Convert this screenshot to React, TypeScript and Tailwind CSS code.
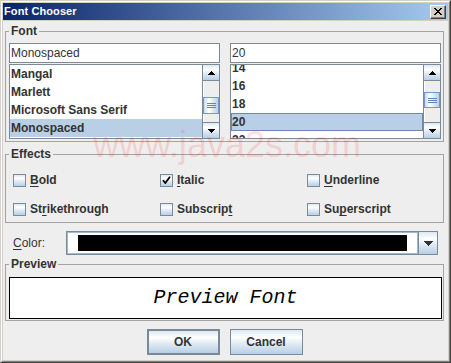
import React from 'react'

const ui = "font-['Liberation_Sans',Arial,sans-serif]"
const ocean = 'bg-[linear-gradient(to_bottom,#dde8f3_0%,#ffffff_30%,#dde8f3_60%,#b8cfe5_100%)]'

function Arrow({ up = false, wide = false }: { up?: boolean; wide?: boolean }) {
  const rows = wide ? [9, 7, 5, 3, 1] : [7, 5, 3, 1]
  const w = rows[0]
  const list = up ? [...rows].reverse() : rows
  return (
    <svg width={w} height={rows.length} className="block" shapeRendering="crispEdges">
      {list.map((n, i) => (
        <rect key={i} x={(w - n) / 2} y={i} width={n} height={1} fill={wide ? '#333' : '#000'} />
      ))}
    </svg>
  )
}

function CloseGlyph() {
  const px: [number, number, number][] = [
    [0, 0, 2], [6, 0, 2], [1, 1, 2], [5, 1, 2], [2, 2, 4], [3, 3, 2],
    [2, 4, 4], [1, 5, 2], [5, 5, 2], [0, 6, 2], [6, 6, 2],
  ]
  return (
    <svg width="8" height="7" className="block" shapeRendering="crispEdges">
      {px.map(([x, y, w], i) => (
        <rect key={i} x={x} y={y} width={w} height={1} fill="#000" />
      ))}
    </svg>
  )
}

function ScrollBar({ thumb }: { thumb: string }) {
  return (
    <div className="flex w-[17px] flex-col border-l border-[#7a8a99] bg-[#eeeeee]">
      <div className={`flex h-[16px] items-center justify-center border-b border-[#7a8a99] ${ocean}`}>
        <Arrow up />
      </div>
      <div className="flex-1 shadow-[inset_1px_0_0_#ffffff]">
        <div className={`${thumb} flex flex-col items-center justify-center gap-[1px] border border-[#7896d0] bg-[linear-gradient(to_right,#c8ddf2,#ffffff_35%,#b8cfe5)]`}>
          <div className="h-px w-[9px] bg-[#6382bf]" />
          <div className="h-px w-[9px] bg-[#6382bf]" />
          <div className="h-px w-[9px] bg-[#6382bf]" />
        </div>
      </div>
      <div className={`flex h-[16px] items-center justify-center border-t border-[#7a8a99] ${ocean}`}>
        <Arrow />
      </div>
    </div>
  )
}

function FontColumn({
  value,
  items,
  selected,
  focused,
  shift,
  thumb,
}: {
  value: string
  items: string[]
  selected: string
  focused: boolean
  shift: string
  thumb: string
}) {
  return (
    <div className="flex flex-col gap-px">
      <div className="flex h-[20px] items-center border border-[#7a8a99] bg-white pl-px text-[12px] leading-[18px]">
        {value}
      </div>
      <div className="flex h-[75px] border border-[#7a8a99] bg-white">
        <div className="min-w-0 flex-1 overflow-hidden">
          <div className={shift}>
            {items.map((it) => (
              <div
                key={it}
                className={`h-[18px] whitespace-nowrap pl-px text-[12px] font-bold leading-[18px] ${
                  it === selected ? 'bg-[#b8cfe5]' : ''
                } ${it === selected && focused ? 'shadow-[inset_0_0_0_1px_#6c87b0]' : ''}`}
              >
                {it}
              </div>
            ))}
          </div>
        </div>
        <ScrollBar thumb={thumb} />
      </div>
    </div>
  )
}

function CheckBox({ label, at, checked = false }: { label: string; at: number; checked?: boolean }) {
  return (
    <div className="flex h-[22px] items-center gap-[4px]">
      <div className={`flex h-[13px] w-[13px] items-center justify-center border border-[#7a8a99] ${ocean}`}>
        {checked && (
          <svg width="9" height="8" viewBox="0 0 9 8" className="block">
            <path d="M1 4.2 L3.3 7 L8 0.8" fill="none" stroke="#000" strokeWidth="1.8" />
          </svg>
        )}
      </div>
      <span className="text-[12px] font-bold leading-[14px]">
        {label.slice(0, at)}
        <span className="underline underline-offset-2">{label[at]}</span>
        {label.slice(at + 1)}
      </span>
    </div>
  )
}

function Legend({ children }: { children: React.ReactNode }) {
  return <legend className="px-[2px] text-[12px] font-bold leading-[14px]">{children}</legend>
}

export default function App() {
  return (
    <div
      className={`${ui} relative h-[363px] w-[451px] border border-[#d4d0c8] border-r-[#404040] border-b-[#404040] bg-[#d4d0c8]`}
    >
      <div className="flex h-full flex-col border border-white border-r-[#808080] border-b-[#808080] p-px">
        <div className="mb-px flex h-[17px] items-center justify-between bg-[linear-gradient(to_right,#0a246a,#a6caf0)] pl-px pr-[2px]">
          <span className="text-[11px] font-bold leading-none tracking-[0.1px] text-white">Font Chooser</span>
          <div className="flex h-[14px] w-[16px] items-center justify-center border border-white border-r-[#404040] border-b-[#404040] bg-[#d4d0c8] shadow-[inset_-1px_-1px_0_#808080]">
            <CloseGlyph />
          </div>
        </div>

        <div className="flex flex-1 flex-col bg-[#eeeeee] pl-[2px] pr-[4px] pt-[3px] text-[#333333]">
          <fieldset className="border border-[#a3a3a3] pb-[2px] pl-[3px] pr-[2px]">
            <Legend>Font</Legend>
            <div className="mt-[5px] grid grid-cols-2 gap-x-[10px]">
              <FontColumn
                value="Monospaced"
                items={['Mangal', 'Marlett', 'Microsoft Sans Serif', 'Monospaced']}
                selected="Monospaced"
                focused={false}
                shift="mt-0"
                thumb="mt-[16px] h-[17px]"
              />
              <FontColumn
                value="20"
                items={['14', '16', '18', '20', '22']}
                selected="20"
                focused
                shift="-mt-[6px]"
                thumb="mt-[11px] h-[16px]"
              />
            </div>
          </fieldset>

          <fieldset className="mt-[5px] border border-[#a3a3a3] pb-[2px] pl-[3px]">
            <Legend>Effects</Legend>
            <div className="ml-[4px] mt-[8px] grid grid-cols-[147px_147px_1fr] gap-y-[7px]">
              <CheckBox label="Bold" at={0} />
              <CheckBox label="Italic" at={0} checked />
              <CheckBox label="Underline" at={0} />
              <CheckBox label="Strikethrough" at={2} />
              <CheckBox label="Subscript" at={8} />
              <CheckBox label="Superscript" at={2} />
            </div>
          </fieldset>

          <div className="mt-[8px] flex h-[24px] items-center pl-[8px] pr-[6px]">
            <span className="w-[53px] text-[12px] leading-[14px]">
              <span className="underline underline-offset-2">C</span>olor:
            </span>
            <div className="flex h-full flex-1 border border-[#7a8a99] bg-white">
              <div className="flex flex-1 px-[11px] py-[3px] shadow-[inset_0_0_0_1px_#a3b8cc]">
                <div className="flex-1 bg-black" />
              </div>
              <div className={`flex w-[19px] items-center justify-center border-l border-[#7a8a99] ${ocean}`}>
                <Arrow wide />
              </div>
            </div>
          </div>

          <fieldset className="mt-[2px] border border-[#a3a3a3] pb-px pl-[3px] pr-px">
            <Legend>Preview</Legend>
            <div className="mt-[6px] flex h-[42px] items-center justify-center border border-black bg-white font-['Liberation_Mono',monospace] text-[20px] italic text-black">
              Preview Font
            </div>
          </fieldset>

          <div className="mt-[8px] flex justify-center gap-[10px]">
            <button className={`h-[26px] w-[73px] border-2 border-[#7a8a99] text-[12px] font-bold text-[#333333] ${ocean}`}>
              OK
            </button>
            <button className={`h-[26px] w-[73px] border border-[#7a8a99] text-[12px] font-bold text-[#333333] ${ocean}`}>
              Cancel
            </button>
          </div>
        </div>
      </div>

      <div className="pointer-events-none absolute left-[92px] top-[126px] whitespace-nowrap text-[36px] leading-none text-[rgba(255,0,0,0.15)]">
        www.java2s.com
      </div>
    </div>
  )
}
